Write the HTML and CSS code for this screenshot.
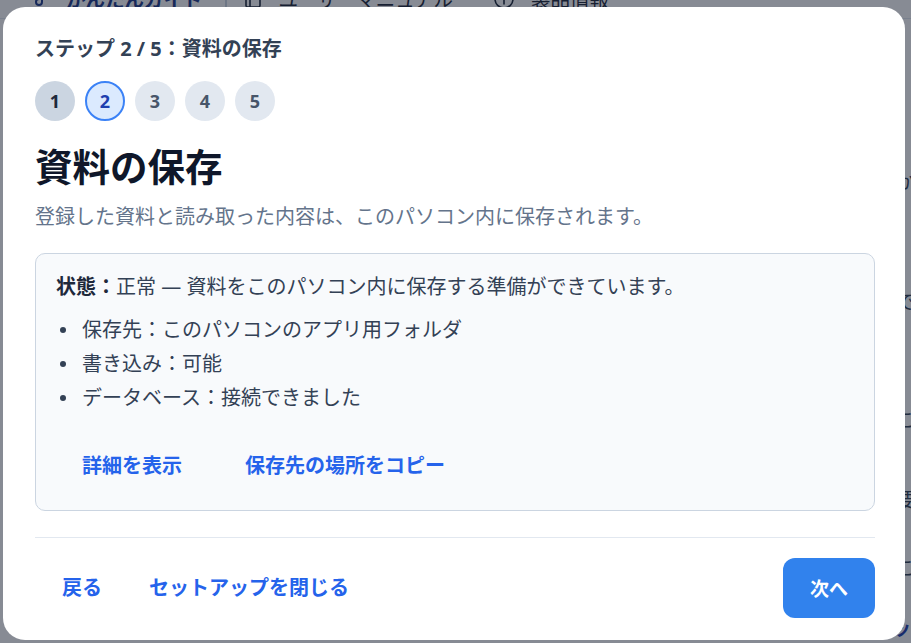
FILE: index.html
```html
<!DOCTYPE html>
<html lang="ja">
<head>
    <meta charset="UTF-8">
    <meta name="viewport" content="width=device-width, initial-scale=1.0">
    <title>初期セットアップ</title>
    <link rel="stylesheet" href="styles.css">
</head>
<body>
    <div class="page">
        <header class="topnav">
            <a class="nav-item nav-guide" href="#">
                <svg width="20" height="20" viewBox="0 0 20 20" fill="none" stroke="currentColor" stroke-width="2" stroke-linecap="round"><path d="M12 3v10a3 3 0 1 1-3-3h3"/><path d="M12 3l4 2"/></svg>
                かんたんガイド
            </a>
            <span class="nav-sep"></span>
            <a class="nav-item" href="#">
                <svg width="20" height="20" viewBox="0 0 20 20" fill="none" stroke="currentColor" stroke-width="1.6"><rect x="3" y="2" width="14" height="16" rx="1.5"/><path d="M7 2v16"/></svg>
                ユーザーマニュアル
            </a>
            <a class="nav-item" href="#">
                <svg width="22" height="22" viewBox="0 0 22 22" fill="none" stroke="currentColor" stroke-width="1.6"><circle cx="11" cy="11" r="9"/><path d="M11 10v6M11 6.5v.5" stroke-linecap="round"/></svg>
                製品情報
            </a>
        </header>
        <div class="page-body">
            <main class="page-main"></main>
            <aside class="page-side">
                <p class="side-a">かんたんに始められます</p>
                <p class="side-b">、ほかの設定もあとで変更できます</p>
                <p class="side-c">できあがった資料は一覧に表示</p>
                <p class="side-d">このパソコン内に保存されます</p>
                <p class="side-e">要約と読み取り結果</p>
                <p class="side-f">こちらから確認できます</p>
            </aside>
        </div>
        <div class="page-foot">新しいファイルをセットアップ一覧</div>
    </div>

    <div class="overlay">
        <div class="dialog" role="dialog" aria-labelledby="dlgTitle">
            <div class="step-label">ステップ 2 / 5：資料の保存</div>
            <ol class="steps">
                <li class="step done">1</li>
                <li class="step current">2</li>
                <li class="step">3</li>
                <li class="step">4</li>
                <li class="step">5</li>
            </ol>
            <h1 class="dlg-title" id="dlgTitle">資料の保存</h1>
            <p class="dlg-desc">登録した資料と読み取った内容は、このパソコン内に保存されます。</p>

            <section class="status-box">
                <p class="status-line"><b>状態：</b>正常 — 資料をこのパソコン内に保存する準備ができています。</p>
                <ul class="status-list">
                    <li>保存先：このパソコンのアプリ用フォルダ</li>
                    <li>書き込み：可能</li>
                    <li>データベース：接続できました</li>
                </ul>
                <div class="status-actions">
                    <button class="link-btn">詳細を表示</button>
                    <button class="link-btn">保存先の場所をコピー</button>
                </div>
            </section>

            <hr class="dlg-rule">

            <footer class="dlg-foot">
                <div class="foot-left">
                    <button class="link-btn">戻る</button>
                    <button class="link-btn">セットアップを閉じる</button>
                </div>
                <button class="primary-btn">次へ</button>
            </footer>
        </div>
    </div>
</body>
</html>
```

FILE: styles.css
```css
*{margin:0;padding:0;box-sizing:border-box;}
li{list-style: none;}
html,body{
    width: 911px;
    height: 643px;
    overflow: hidden;
}
body{
    font-family: "Noto Sans", "Noto Sans CJK JP", sans-serif;
    background: #fff;
    color: #334155;
}
button{
    font: inherit;
    border: none;
    background: none;
    cursor: pointer;
}

/* page behind the dialog */
.page{
    height: 643px;
    display: flex;
    flex-direction: column;
}
.topnav{
    height: 40px;
    margin-top: -21px;
    display: flex;
    align-items: center;
    padding-left: 30px;
    border-bottom: 1px solid #e2e8f0;
}
.nav-item{
    display: flex;
    align-items: center;
    gap: 16px;
    font-size: 19.5px;
    color: #1e293b;
    text-decoration: none;
    margin-right: 40px;
}
.nav-guide{
    color: #1e3a8a;
    font-weight: 700;
    margin-right: 22px;
}
.nav-sep{
    width: 2px;
    height: 40px;
    background: #cbd5e1;
    margin-right: 16px;
}
.page-body{
    flex: 1;
    display: flex;
}
.page-main{
    width: 896px;
    flex-shrink: 0;
}
.page-side{
    flex: 1;
    white-space: nowrap;
    font-size: 19px;
    color: #334155;
}
.side-a{margin-top: 148px;}
.side-b{margin-top: 0;}
.side-c{margin-top: 64px;}
.side-d{margin-top: 90px;}
.side-e{margin-top: 52px;}
.side-f{margin-top: 40px;}
.page-foot{
    padding: 0 0 2px 664px;
    white-space: nowrap;
    font-size: 19px;
    font-weight: 700;
    color: #1e40af;
}

/* dim layer */
.overlay{
    position: fixed;
    inset: 0;
    background: rgba(15,23,42,0.5);
    display: flex;
    align-items: flex-start;
    padding: 7px 0 0 3px;
}

.dialog{
    width: 902px;
    height: 633px;
    background: #fff;
    border-radius: 22px;
    padding: 30px 30px 22px 32px;
    display: flex;
    flex-direction: column;
}
.step-label{
    font-size: 20px;
    line-height: 24px;
    font-weight: 700;
    color: #334155;
}
.steps{
    display: flex;
    gap: 10px;
    margin-top: 20px;
}
.step{
    width: 40px;
    height: 40px;
    border-radius: 50%;
    display: flex;
    align-items: center;
    justify-content: center;
    font-size: 18px;
    font-weight: 700;
    background: #e2e8f0;
    color: #475569;
}
.step.done{
    background: #cbd5e1;
    color: #1e293b;
}
.step.current{
    background: #dbeafe;
    border: 2px solid #3b82f6;
    color: #1e40af;
}
.dlg-title{
    margin-top: 24px;
    font-size: 37.5px;
    line-height: 44px;
    font-weight: 700;
    color: #0f172a;
}
.dlg-desc{
    margin-top: 16px;
    font-size: 20px;
    line-height: 24px;
    color: #64748b;
}

.status-box{
    margin-top: 24px;
    border: 1px solid #cbd5e1;
    border-radius: 10px;
    background: #f8fafc;
    padding: 20px 20px 22px;
    font-size: 20px;
    line-height: 26px;
}
.status-line b{
    color: #1e293b;
}
.status-list{
    margin-top: 17px;
    padding-left: 4px;
    display: flex;
    flex-direction: column;
    gap: 8px;
}
.status-list li{
    display: flex;
    align-items: center;
}
.status-list li::before{
    content: "";
    width: 6px;
    height: 6px;
    border-radius: 50%;
    background: #334155;
    margin-right: 16px;
}
.status-actions{
    margin-top: 33px;
    display: flex;
    gap: 11px;
}
.link-btn{
    padding: 10px 26px;
    font-size: 20px;
    line-height: 24px;
    font-weight: 700;
    color: #2563eb;
}

.dlg-rule{
    margin-top: 26px;
    border: none;
    border-top: 1px solid #e2e8f0;
}
.dlg-foot{
    margin-top: 20px;
    display: flex;
    align-items: center;
    justify-content: space-between;
}
.foot-left{
    display: flex;
    padding-left: 2px;
}
.foot-left .link-btn{
    padding: 12px 22px 12px 25px;
}
.primary-btn{
    height: 60px;
    padding: 0 27px;
    border-radius: 12px;
    background: #3182ed;
    color: #fff;
    font-size: 19px;
    font-weight: 700;
}
```
